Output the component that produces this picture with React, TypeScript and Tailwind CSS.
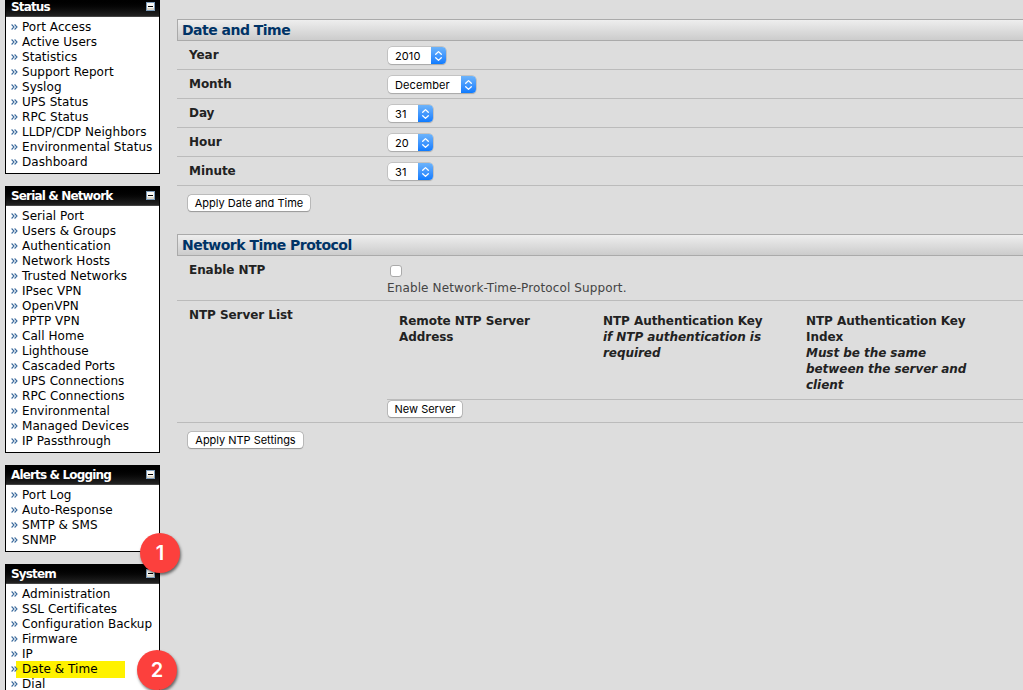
import React from "react";

const panels = [
  {
    title: "Status",
    items: ["Port Access", "Active Users", "Statistics", "Support Report", "Syslog", "UPS Status", "RPC Status", "LLDP/CDP Neighbors", "Environmental Status", "Dashboard"],
  },
  {
    title: "Serial & Network",
    items: ["Serial Port", "Users & Groups", "Authentication", "Network Hosts", "Trusted Networks", "IPsec VPN", "OpenVPN", "PPTP VPN", "Call Home", "Lighthouse", "Cascaded Ports", "UPS Connections", "RPC Connections", "Environmental", "Managed Devices", "IP Passthrough"],
  },
  { title: "Alerts & Logging", items: ["Port Log", "Auto-Response", "SMTP & SMS", "SNMP"] },
  { title: "System", items: ["Administration", "SSL Certificates", "Configuration Backup", "Firmware", "IP", "Date & Time", "Dial"] },
];

const fields = [
  { label: "Year", value: "2010", width: "w-[58px]" },
  { label: "Month", value: "December", width: "w-[88px]" },
  { label: "Day", value: "31", width: "w-[45px]" },
  { label: "Hour", value: "20", width: "w-[45px]" },
  { label: "Minute", value: "31", width: "w-[45px]" },
];

function CollapseIcon() {
  return (
    <svg width="9" height="9" viewBox="0 0 9 9" className="-mt-px shrink-0" shapeRendering="crispEdges">
      <rect width="9" height="9" fill="#7b9ab8" />
      <rect x="1" y="1" width="7" height="7" fill="#f8f7f3" />
      <rect x="1" y="6" width="7" height="2" fill="#dcd8cc" />
      <rect x="2" y="4" width="5" height="1" fill="#000" />
    </svg>
  );
}

function Bullet() {
  return (
    <svg width="7" height="6" viewBox="0 0 7 6" className="mr-[4px] shrink-0 -translate-y-px" fill="none" stroke="#3a6a9c" strokeWidth="1.1">
      <path d="M0.6 0.5L3 3L0.6 5.5M3.6 0.5L6 3L3.6 5.5" />
    </svg>
  );
}

function Panel({ title, items }: { title: string; items: string[] }) {
  return (
    <section className="border border-black bg-white">
      <h2 className="flex h-[19px] items-center justify-between border-b border-[#444] bg-linear-to-b from-black to-[#222] pr-1 pl-[5px] font-['DejaVu_Sans'] text-[12px] font-bold tracking-[-0.85px] text-white">
        <span>{title}</span>
        <CollapseIcon />
      </h2>
      <ul className="pt-[3px] pb-[3px]">
        {items.map((item) => (
          <li key={item} className="flex h-[15px] items-center pl-[5px] text-[12px] leading-[15px] tracking-[0.05px] whitespace-nowrap">
            {item === "Date & Time" ? (
              <span className="flex h-[17px] w-[114px] items-center bg-linear-to-r from-transparent from-[5px] to-[#fff200] to-[5px]">
                <Bullet />
                {item}
              </span>
            ) : (
              <>
                <Bullet />
                {item}
              </>
            )}
          </li>
        ))}
      </ul>
    </section>
  );
}

function Select({ value, width }: { value: string; width: string }) {
  return (
    <button className={`ml-px flex h-[17px] overflow-hidden rounded-[4px] bg-white text-left font-[Inter] text-[11px] leading-[18px] tracking-[0.1px] text-black shadow-[0_0_0_0.5px_#aaa,0_1px_1px_#aaa] ${width}`}>
      <span className="flex-1 pl-[7px]">{value}</span>
      <span className="flex h-full w-[15px] items-center justify-center bg-linear-to-b from-[#6cb3fa] to-[#0a7bff]">
        <svg width="9" height="12" viewBox="0 0 9 12" fill="none" stroke="white" strokeWidth="1.3" strokeLinecap="round" strokeLinejoin="round">
          <path d="M1.7 4.3L4.5 1.6L7.3 4.3M1.7 7.7L4.5 10.4L7.3 7.7" />
        </svg>
      </span>
    </button>
  );
}

function PushButton({ children, className }: { children: string; className: string }) {
  return (
    <button className={`block h-[16px] rounded-[3.5px] bg-white text-center font-[Inter] text-[11px] leading-[17px] whitespace-nowrap text-black shadow-[0_0_0_0.5px_#999,0_1px_1px_#999] ${className}`}>
      {children}
    </button>
  );
}

function SectionTitle({ children }: { children: string }) {
  return (
    <h1 className="flex h-[22px] items-center border border-r-0 border-[#aaa] bg-linear-to-b from-[#eee] to-[#ccc] pl-1 text-[14px] font-bold tracking-[-0.52px] text-[#036]">
      {children}
    </h1>
  );
}

function Marker({ label, className }: { label: string; className: string }) {
  return (
    <div className={`absolute flex size-10 items-center justify-center rounded-full bg-[#fc403d] font-[Inter] text-[20px] font-semibold text-white shadow-[1px_2px_3px_rgba(0,0,0,0.55)] ${className}`}>
      {label}
    </div>
  );
}

export default function App() {
  return (
    <div className="relative flex h-[690px] w-[1023px] overflow-hidden bg-[#ddd] font-['DejaVu_Sans',sans-serif] text-[12px] text-black">
      <nav className="-mt-[3px] ml-[5px] flex w-[155px] shrink-0 flex-col gap-3">
        {panels.map((p) => (
          <Panel key={p.title} {...p} />
        ))}
      </nav>
      <main className="ml-[17px] flex-1 pt-[19px] text-[#222]">
        <SectionTitle>Date and Time</SectionTitle>
        {fields.map((f) => (
          <div key={f.label} className="flex h-[29px] border-b border-[#bbb] pl-3">
            <div className="w-[198px] pt-[6px] leading-4 font-bold tracking-[-0.06px]">{f.label}</div>
            <div className="pt-[6px]">
              <Select value={f.value} width={f.width} />
            </div>
          </div>
        ))}
        <div className="h-[48px] pt-[9px] pl-[11px]">
          <PushButton className="w-[122px]">Apply Date and Time</PushButton>
        </div>
        <SectionTitle>Network Time Protocol</SectionTitle>
        <div className="flex h-[45px] border-b border-[#bbb] pl-3">
          <div className="w-[198px] pt-[6px] leading-4 font-bold tracking-[-0.06px]">Enable NTP</div>
          <div className="pt-[9px]">
            <div className="ml-[3px] size-3 rounded-[3px] border border-[#aaa] bg-white" />
            <p className="mt-[3px] leading-4 tracking-[0.12px] text-[#444]">Enable Network-Time-Protocol Support.</p>
          </div>
        </div>
        <div className="flex h-[122px] border-b border-[#bbb] pl-3">
          <div className="w-[198px] pt-[6px] leading-4 font-bold tracking-[-0.06px]">NTP Server List</div>
          <div className="flex-1">
            <div className="flex h-[99px] border-b border-[#bbb] pt-3 pl-3 leading-4 font-bold tracking-[-0.06px] whitespace-nowrap">
              <div className="w-[204px]">Remote NTP Server<br />Address</div>
              <div className="w-[203px]">NTP Authentication Key<br /><em>if NTP authentication is<br />required</em></div>
              <div>NTP Authentication Key<br />Index<br /><em>Must be the same<br />between the server and<br />client</em></div>
            </div>
            <div className="pt-px pl-px">
              <PushButton className="w-[74px]">New Server</PushButton>
            </div>
          </div>
        </div>
        <div className="pt-[9px] pl-[11px]">
          <PushButton className="w-[115px] tracking-[-0.02px]">Apply NTP Settings</PushButton>
        </div>
      </main>
      <Marker label="1" className="top-[533px] left-[140px]" />
      <Marker label="2" className="top-[650px] left-[137px]" />
    </div>
  );
}
